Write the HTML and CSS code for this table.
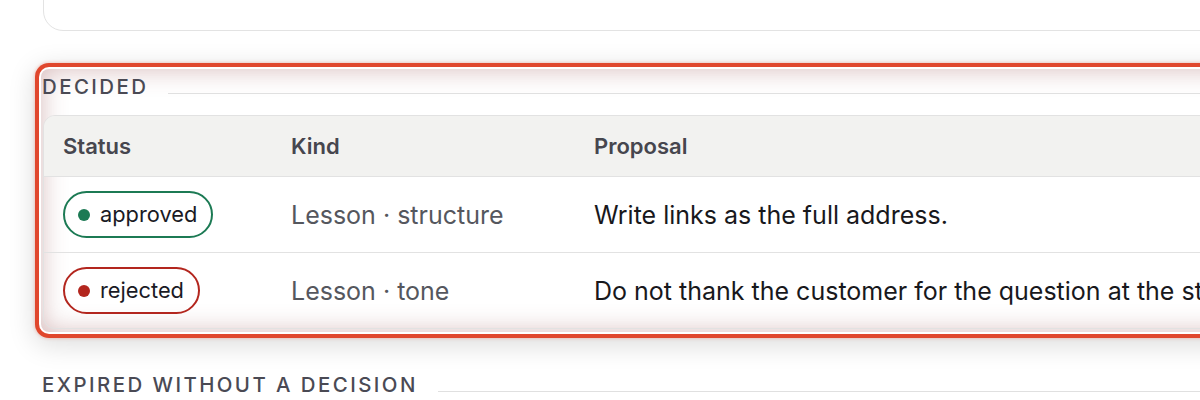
FILE: index.html
```html
<!DOCTYPE html>
<html lang="en">
<head>
<meta charset="utf-8">
<title>Proposals</title>
<link rel="stylesheet" href="styles.css">
</head>
<body>
<div class="page">
  <div class="top-card"></div>

  <section class="group group--highlight">
    <h2 class="group-title">Decided</h2>
    <div class="table-wrap">
      <table class="ptable">
        <colgroup>
          <col class="c-status">
          <col class="c-kind">
          <col class="c-proposal">
        </colgroup>
        <thead>
          <tr><th>Status</th><th>Kind</th><th>Proposal</th></tr>
        </thead>
        <tbody>
          <tr>
            <td><span class="badge badge--approved"><span class="dot"></span>approved</span></td>
            <td class="kind">Lesson · structure</td>
            <td class="proposal">Write links as the full address.</td>
          </tr>
          <tr>
            <td><span class="badge badge--rejected"><span class="dot"></span>rejected</span></td>
            <td class="kind">Lesson · tone</td>
            <td class="proposal">Do not thank the customer for the question at the start of the reply.</td>
          </tr>
        </tbody>
      </table>
    </div>
  </section>

  <section class="group">
    <h2 class="group-title">Expired without a decision</h2>
  </section>
</div>
</body>
</html>
```

FILE: styles.css
```css
html, body {
  margin: 0;
  padding: 0;
  background: #ffffff;
  overflow: hidden;
}
body {
  font-family: Inter, "Noto Sans", sans-serif;
  color: #1c1c22;
}
.page {
  width: 1500px;
  padding-left: 41px;
}
.top-card {
  margin-top: -60px;
  margin-left: 2px;
  height: 89px;
  border: 1px solid #e3e3e3;
  border-radius: 20px;
  background: #fff;
}
.group {
  margin-top: 38px;
}
.group--highlight {
  padding: 6px 0 3px 0;
  border-radius: 8px;
  background: #fff;
  box-shadow:
    0 0 0 2px #ffffff,
    0 0 0 6px #e0472d,
    0 0 3px 7px rgba(224, 71, 45, 0.22),
    0 6px 26px 8px rgba(0, 0, 0, 0.13),
    inset 0 0 26px rgba(140, 60, 60, 0.36);
}
.group--highlight + .group {
  margin-top: 34px;
  padding-top: 7px;
}
.group-title {
  display: flex;
  align-items: baseline;
  gap: 20px;
  margin: 0 0 0 1px;
  font-size: 20.4px;
  font-weight: 500;
  line-height: 24px;
  letter-spacing: 2.45px;
  text-transform: uppercase;
  color: #4a4a54;
}
.group-title::after {
  content: "";
  flex: 1;
  height: 1px;
  background: #e0e0e0;
}
.table-wrap {
  margin: 16px 0 0 2px;
  border: 1px solid #e2e2e2;
  border-radius: 12px;
  overflow: hidden;
}
.ptable {
  border-collapse: collapse;
  width: 100%;
  table-layout: fixed;
  font-size: 25px;
  line-height: 28px;
}
.c-status { width: 228px; }
.c-kind { width: 303px; }
.ptable th {
  text-align: left;
  font-size: 22px;
  line-height: 26px;
  font-weight: 600;
  color: #46464e;
  background: #f2f2f0;
  padding: 17px 20px 17px 19px;
  border-bottom: 1px solid #e2e2e2;
}
.ptable td {
  padding: 14px 20px 14px 19px;
  white-space: nowrap;
  vertical-align: middle;
  height: 47px;
}
.ptable tbody tr + tr td {
  border-top: 1px solid #e2e2e2;
}
.kind {
  color: #55575e;
}
.proposal {
  color: #18181c;
}
.badge {
  display: inline-flex;
  align-items: center;
  gap: 10px;
  padding: 8px 14px 8px 13px;
  border: 2px solid;
  border-radius: 999px;
  font-size: 21.8px;
  line-height: 27px;
  color: #1a1a24;
}
.badge .dot {
  width: 12px;
  height: 12px;
  border-radius: 50%;
}
.badge--approved { border-color: #1c7a54; }
.badge--approved .dot { background: #1c7a54; }
.badge--rejected { border-color: #b3261e; }
.badge--rejected .dot { background: #b3261e; }
```
